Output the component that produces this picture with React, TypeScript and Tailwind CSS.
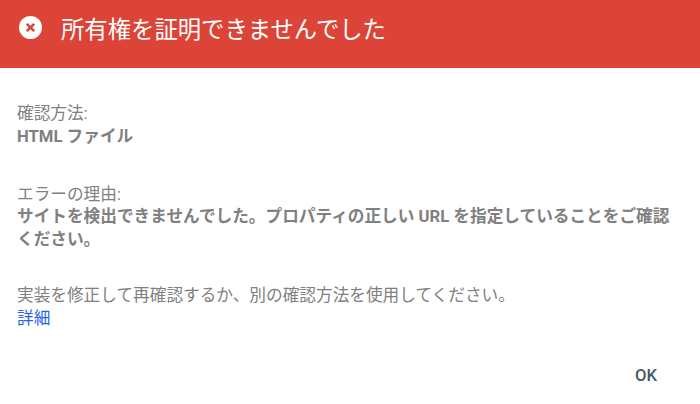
export default function App() {
  return (
    <div className="w-[700px] h-[404px] bg-white flex flex-col overflow-hidden font-['Roboto','Noto_Sans_CJK_JP',sans-serif]">
      <div className="h-[68px] bg-[#db4437] flex items-center pl-[19px] gap-[19px] shrink-0">
        <svg width="23" height="23" viewBox="0 0 23 23" className="-mt-[13px]">
          <circle cx="11.5" cy="11.5" r="11.5" fill="#fff" />
          <path d="M7.8 7.8l7.4 7.4M15.2 7.8l-7.4 7.4" stroke="#db4437" strokeWidth="2.6" />
        </svg>
        <span className="text-[23.35px] text-white -mt-[6px]">所有権を証明できませんでした</span>
      </div>
      <div className="flex-1 flex flex-col px-[17px] pt-[35px] text-[16.67px] leading-[22.5px] text-[#808080]">
        <div>確認方法:</div>
        <div className="font-bold">HTML ファイル</div>
        <div className="mt-[35.5px]">エラーの理由:</div>
        <div className="font-bold">サイトを検出できませんでした。プロパティの正しい URL を指定していることをご確認ください。</div>
        <div className="mt-[34px]">実装を修正して再確認するか、別の確認方法を使用してください。</div>
        <div className="text-[#2a62f0]">詳細</div>
        <div className="mt-auto mb-[17px] self-end pr-[26px] text-[#455a64] font-medium">OK</div>
      </div>
    </div>
  );
}
